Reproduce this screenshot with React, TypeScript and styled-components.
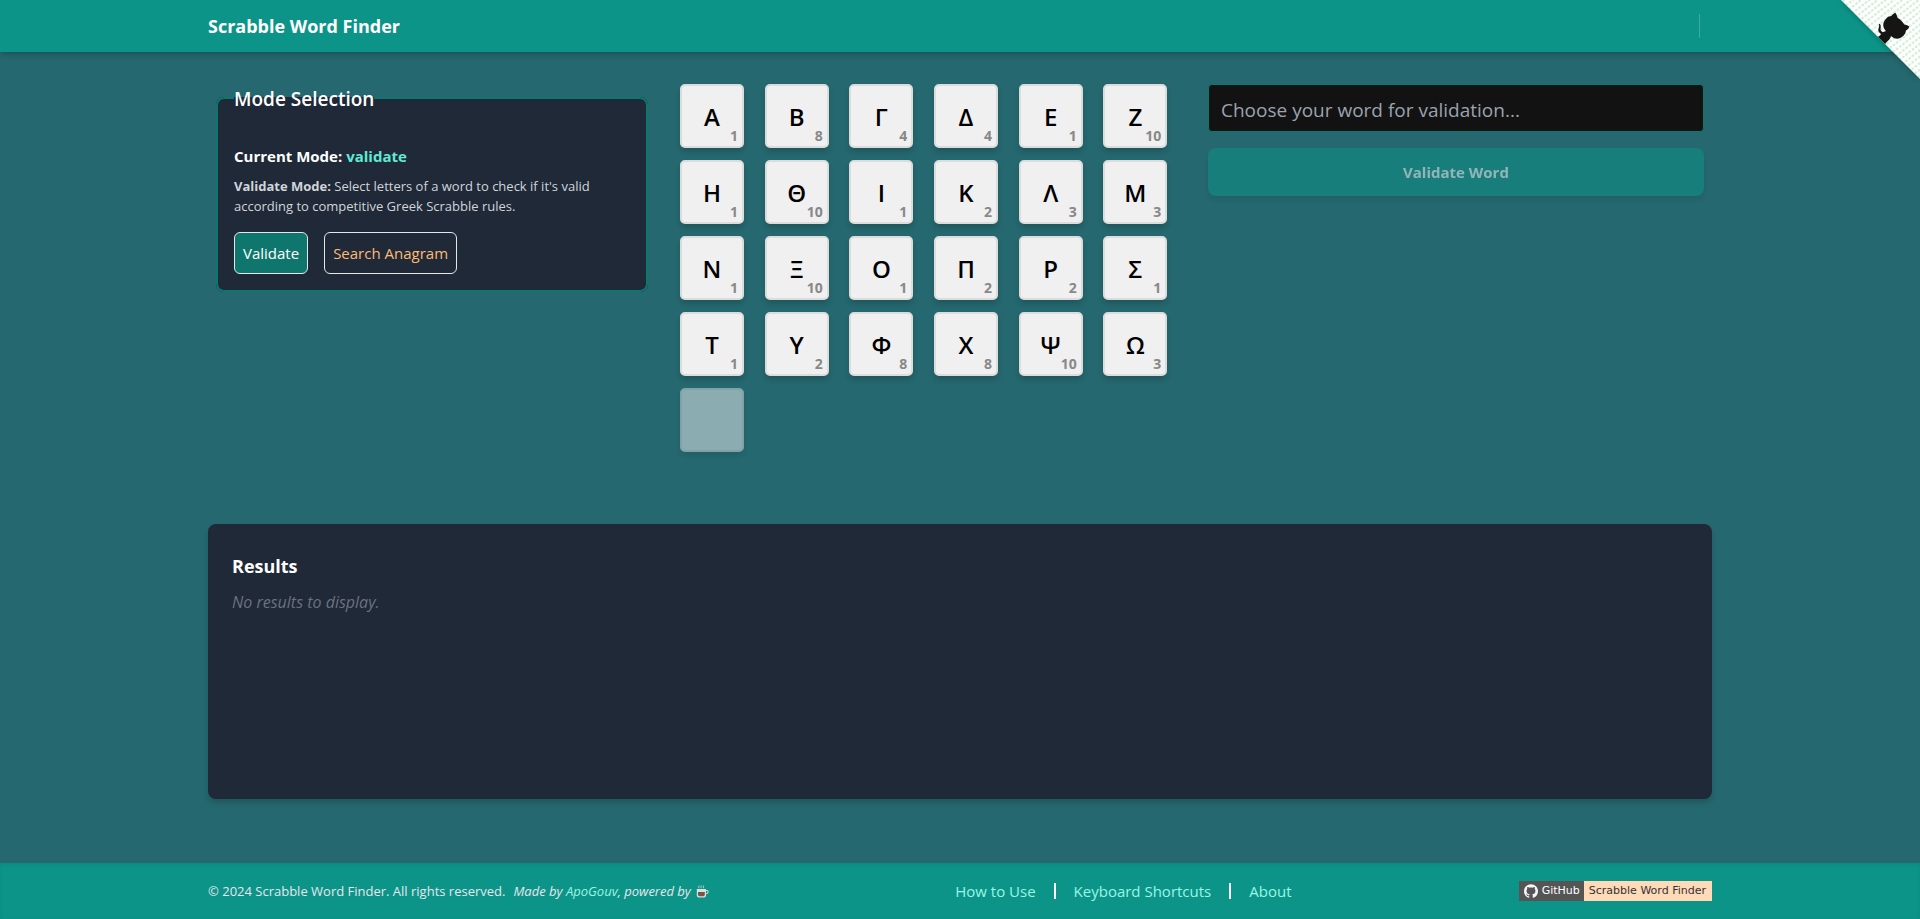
import React, { useState } from "react";
import styled, { createGlobalStyle } from "styled-components";

const GlobalStyle = createGlobalStyle`
  *, *::before, *::after { box-sizing: border-box; }
  body {
    margin: 0;
    background: #25686f;
    color: #ffffff;
    font-family: "Segoe UI", "Open Sans", "Noto Sans", sans-serif;
    font-size: 15px;
    line-height: 24px;
  }
  h1, h2, p { margin: 0; }
  button, input { font: inherit; }
  a { color: inherit; text-decoration: none; }
`;

const Page = styled.div`
  display: flex;
  flex-direction: column;
  min-height: 100vh;
`;

const Container = styled.div`
  width: 100%;
  max-width: 1536px;
  margin: 0 auto;
  padding: 0 16px;
`;

const Header = styled.header`
  background: #0d9488;
  box-shadow: 0 4px 6px -1px rgba(0, 0, 0, 0.15), 0 2px 4px -2px rgba(0, 0, 0, 0.15);
`;

const HeaderRow = styled(Container)`
  display: flex;
  align-items: center;
  justify-content: space-between;
  height: 52px;
`;

const Brand = styled.h1`
  font-size: 18px;
  line-height: 28px;
  font-weight: 700;
`;

const Divider = styled.span`
  width: 1px;
  height: 24px;
  margin-right: 12px;
  background: rgba(255, 255, 255, 0.2);
`;

const Corner = styled.a`
  position: absolute;
  top: 0;
  right: 0;
  line-height: 0;
  filter: drop-shadow(0 0 3px rgba(0, 0, 0, 0.3));
`;

const Main = styled(Container).attrs({ as: "main" })`
  flex: 1;
  padding-top: 32px;
  padding-bottom: 64px;
`;

const Columns = styled.div`
  display: grid;
  grid-template-columns: 7fr 8fr 8fr;
  gap: 16px;
  align-items: start;
  min-height: 440px;
`;

const Column = styled.section`
  min-width: 0;
  padding: 0 8px;
`;

const ModeBox = styled.fieldset`
  margin: 0;
  padding: 0 16px 16px;
  border: 2px solid #0f766e;
  border-radius: 8px;
  background: #1f2937;
`;

const Legend = styled.legend`
  padding: 2px 0 0;
  font-size: 19px;
  line-height: 26px;
  font-weight: 600;
`;

const CurrentMode = styled.p`
  margin-top: 32px;
  font-weight: 700;
`;

const ModeName = styled.span`
  color: #5eead4;
`;

const ModeHelp = styled.p`
  margin-top: 8px;
  color: #d1d5db;
  font-size: 13px;
  line-height: 20px;
`;

const ModeButtons = styled.div`
  display: flex;
  gap: 16px;
  margin-top: 16px;
`;

const ModeButton = styled.button<{ $active: boolean }>`
  padding: 8px;
  border: 1px solid #e5e7eb;
  border-radius: 6px;
  background: ${(p) => (p.$active ? "#0f766e" : "transparent")};
  color: ${(p) => (p.$active ? "#ffffff" : "#fdba74")};
  cursor: pointer;
`;

const Tiles = styled.div`
  display: grid;
  grid-template-columns: repeat(6, 1fr);
  gap: 12px;
`;

const Tile = styled.button`
  position: relative;
  width: 64px;
  height: 64px;
  padding: 2px 0 0;
  border: 2px solid #dcdcdc;
  border-radius: 5px;
  background: #f0f0f0;
  color: #000000;
  font-size: 24px;
  line-height: 32px;
  font-weight: 600;
  box-shadow: 0 4px 6px -1px rgba(0, 0, 0, 0.2);
  cursor: pointer;

  &:disabled {
    opacity: 0.5;
    cursor: default;
  }
`;

const Points = styled.span`
  position: absolute;
  right: 4px;
  bottom: 0;
  color: #888888;
  font-size: 14px;
  line-height: 20px;
  font-weight: 700;
`;

const WordForm = styled.form`
  display: flex;
  flex-direction: column;
  gap: 16px;
`;

const WordInput = styled.input`
  width: 100%;
  height: 48px;
  padding: 4px 12px 0;
  border: 1px solid #0f766e;
  border-radius: 4px;
  background: #121212;
  color: #ffffff;
  font-size: 19px;
  line-height: 28px;

  &::placeholder { color: #9ca3af; opacity: 1; }
`;

const SubmitButton = styled.button`
  height: 48px;
  border: 0;
  border-radius: 8px;
  background: #0d9488;
  color: #ffffff;
  font-weight: 700;
  box-shadow: 0 4px 6px -1px rgba(0, 0, 0, 0.2);

  &:disabled { opacity: 0.5; }
`;

const Results = styled.section`
  min-height: 275px;
  padding: 28px 24px;
  border-radius: 8px;
  background: #1f2937;
  box-shadow: 0 4px 6px -1px rgba(0, 0, 0, 0.2);
`;

const ResultsTitle = styled.h2`
  font-size: 18px;
  line-height: 28px;
  font-weight: 700;
`;

const Empty = styled.p`
  margin-top: 10px;
  color: #6b7280;
  font-size: 16px;
  font-style: italic;
`;

const Footer = styled.footer`
  background: #0d9488;
  box-shadow: inset 0 2px 4px rgba(0, 0, 0, 0.06);
`;

const FooterRow = styled(Container)`
  display: flex;
  align-items: center;
  justify-content: space-between;
  height: 56px;
`;

const Copyright = styled.p`
  min-width: 520px;
  color: #e5e7eb;
  font-size: 13px;
  line-height: 20px;
  display: flex;
  align-items: center;
  gap: 8px;
`;

const Credit = styled.em`
  display: inline-flex;
  align-items: center;
`;

const Author = styled.a`
  color: #99f6e4;
`;

const Cup = styled.svg`
  margin-left: 5px;
`;

const FooterNav = styled.nav`
  display: flex;
  align-items: center;
  gap: 18px;
`;

const FooterLink = styled.a`
  color: #99f6e4;
`;

const Bar = styled.span`
  width: 2px;
  height: 16px;
  background: #ffffff;
`;

const Badge = styled.a`
  display: flex;
  height: 20px;
  font-family: Verdana, "DejaVu Sans", sans-serif;
  font-size: 11px;
  line-height: 20px;
`;

const BadgeName = styled.span`
  display: flex;
  align-items: center;
  gap: 4px;
  padding: 0 4px 0 5px;
  background: #555555;
  color: #ffffff;
`;

const BadgeValue = styled.span`
  padding: 0 6px 0 5px;
  background: #ffdab9;
  color: #333333;
`;

const LETTERS: [string, number][] = [
  ["Α", 1], ["Β", 8], ["Γ", 4], ["Δ", 4], ["Ε", 1], ["Ζ", 10],
  ["Η", 1], ["Θ", 10], ["Ι", 1], ["Κ", 2], ["Λ", 3], ["Μ", 3],
  ["Ν", 1], ["Ξ", 10], ["Ο", 1], ["Π", 2], ["Ρ", 2], ["Σ", 1],
  ["Τ", 1], ["Υ", 2], ["Φ", 8], ["Χ", 8], ["Ψ", 10], ["Ω", 3],
];

const GithubCorner = () => (
  <Corner href="#github" aria-label="View source on GitHub">
    <svg width="79" height="79" viewBox="0 0 250 250" aria-hidden="true">
      <defs>
        <pattern id="dots" width="13" height="16" patternUnits="userSpaceOnUse" patternTransform="rotate(-38)">
          <rect width="13" height="16" fill="#fcfffc" />
          <rect x="1" y="4" width="9" height="6" rx="3" fill="#cde8d0" />
        </pattern>
      </defs>
      <path d="M0,0 L250,250 L250,0 Z" fill="url(#dots)" />
      <path fill="#151513" d="M128.3,109.0 C113.8,99.7 119.0,89.6 119.0,89.6 C122.0,82.7 120.5,78.6 120.5,78.6 C119.2,72.0 123.4,76.3 123.4,76.3 C127.3,80.9 125.5,87.3 125.5,87.3 C122.9,97.6 130.6,101.9 134.4,103.2" />
      <path fill="#151513" d="M115.0,115.0 C114.9,115.1 118.7,116.5 119.8,115.4 L133.7,101.6 C136.9,99.2 139.9,98.4 142.2,98.6 C133.8,88.0 127.5,74.4 143.8,58.0 C148.5,53.4 154.0,51.2 159.7,51.0 C160.3,49.4 163.2,43.6 171.4,40.1 C171.4,40.1 176.1,42.5 178.8,56.2 C183.1,58.6 187.2,61.8 190.9,65.4 C194.5,69.0 197.7,73.2 200.1,77.6 C213.8,80.2 216.3,84.9 216.3,84.9 C212.7,93.1 206.9,96.0 205.4,96.6 C205.1,102.4 203.0,107.8 198.3,112.5 C181.9,128.9 168.3,122.5 157.7,114.1 C157.9,116.9 156.7,120.9 152.7,124.9 L141.0,136.5 C139.8,137.7 141.6,141.9 141.8,141.8 Z" />
    </svg>
  </Corner>
);

const GithubMark = () => (
  <svg width="14" height="14" viewBox="0 0 24 24" fill="#f5f5f5" aria-hidden="true">
    <path d="M12 .297c-6.63 0-12 5.373-12 12 0 5.303 3.438 9.8 8.205 11.385.6.113.82-.258.82-.577 0-.285-.01-1.04-.015-2.04-3.338.724-4.042-1.61-4.042-1.61C4.422 18.07 3.633 17.7 3.633 17.7c-1.087-.744.084-.729.084-.729 1.205.084 1.838 1.236 1.838 1.236 1.07 1.835 2.809 1.305 3.495.998.108-.776.417-1.305.76-1.605-2.665-.3-5.466-1.332-5.466-5.93 0-1.31.465-2.38 1.235-3.22-.135-.303-.54-1.523.105-3.176 0 0 1.005-.322 3.3 1.23.96-.267 1.98-.399 3-.405 1.02.006 2.04.138 3 .405 2.28-1.552 3.285-1.23 3.285-1.23.645 1.653.24 2.873.12 3.176.765.84 1.23 1.91 1.23 3.22 0 4.61-2.805 5.625-5.475 5.92.42.36.81 1.096.81 2.22 0 1.606-.015 2.896-.015 3.286 0 .315.21.69.825.57C20.565 22.092 24 17.592 24 12.297c0-6.627-5.373-12-12-12" />
  </svg>
);

const CoffeeCup = () => (
  <Cup width="13" height="13" viewBox="0 0 13 13" role="img" aria-label="coffee">
    <path d="M3 3.2 Q2.2 2.2 3.2 .4 M5.3 3.2 Q4.5 2.2 5.5 .4 M7.6 3.2 Q6.8 2.2 7.8 .4" stroke="#b9cdca" fill="none" strokeWidth=".9" />
    <path d="M9.6 5.5 H11.2 Q12.4 5.5 12 7.3 Q11.6 9 9.4 9" stroke="#cfd8d6" fill="none" strokeWidth="1.1" />
    <path d="M.8 4 H10 V10.4 Q10 12.4 8 12.4 H2.8 Q.8 12.4 .8 10.4 Z" fill="#d9e0de" />
    <path d="M2 7 H8.8 V9.6 Q8.8 11.2 7.2 11.2 H3.6 Q2 11.2 2 9.6 Z" fill="#7a5547" />
  </Cup>
);

export default function App() {
  const [mode, setMode] = useState("validate");
  const [word, setWord] = useState("");
  return (
    <>
      <GlobalStyle />
      <Page>
        <Header>
          <HeaderRow>
            <Brand>Scrabble Word Finder</Brand>
            <Divider />
          </HeaderRow>
          <GithubCorner />
        </Header>
        <Main>
          <Columns>
            <Column>
              <ModeBox>
                <Legend>Mode Selection</Legend>
                <CurrentMode>
                  Current Mode: <ModeName>{mode}</ModeName>
                </CurrentMode>
                <ModeHelp>
                  <strong>Validate Mode:</strong> Select letters of a word to check if it's valid according to competitive Greek Scrabble rules.
                </ModeHelp>
                <ModeButtons>
                  <ModeButton type="button" $active={mode === "validate"} onClick={() => setMode("validate")}>
                    Validate
                  </ModeButton>
                  <ModeButton type="button" $active={mode === "anagram"} onClick={() => setMode("anagram")}>
                    Search Anagram
                  </ModeButton>
                </ModeButtons>
              </ModeBox>
            </Column>
            <Column>
              <Tiles>
                {LETTERS.map(([letter, points]) => (
                  <Tile key={letter} type="button" onClick={() => setWord(word + letter)}>
                    {letter}
                    <Points>{points}</Points>
                  </Tile>
                ))}
                <Tile type="button" disabled aria-label="Blank tile" />
              </Tiles>
            </Column>
            <Column>
              <WordForm onSubmit={(e) => e.preventDefault()}>
                <WordInput
                  type="text"
                  aria-label="Word"
                  placeholder="Choose your word for validation..."
                  value={word}
                  onChange={(e) => setWord(e.target.value)}
                />
                <SubmitButton type="submit" disabled={!word}>Validate Word</SubmitButton>
              </WordForm>
            </Column>
          </Columns>
          <Results>
            <ResultsTitle>Results</ResultsTitle>
            <Empty>No results to display.</Empty>
          </Results>
        </Main>
        <Footer>
          <FooterRow>
            <Copyright>
              <span>© 2024 Scrabble Word Finder. All rights reserved.</span>
              <Credit>
                <span>Made by <Author href="#author">ApoGouv</Author>, powered by</span>
                <CoffeeCup />
              </Credit>
            </Copyright>
            <FooterNav>
              <FooterLink href="#how-to-use">How to Use</FooterLink>
              <Bar />
              <FooterLink href="#shortcuts">Keyboard Shortcuts</FooterLink>
              <Bar />
              <FooterLink href="#about">About</FooterLink>
            </FooterNav>
            <Badge href="#repository">
              <BadgeName><GithubMark />GitHub</BadgeName>
              <BadgeValue>Scrabble Word Finder</BadgeValue>
            </Badge>
          </FooterRow>
        </Footer>
      </Page>
    </>
  );
}
